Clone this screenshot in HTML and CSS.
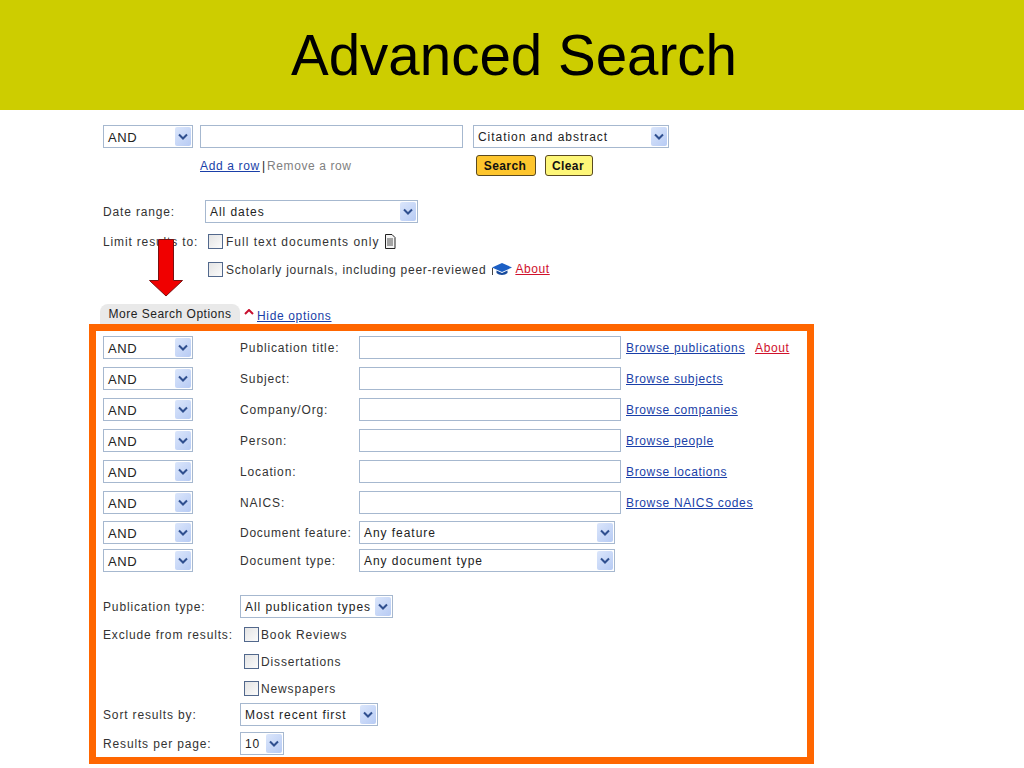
FILE: index.html
```html
<!DOCTYPE html>
<html lang="en">
<head>
<meta charset="utf-8">
<title>Advanced Search</title>
<link rel="stylesheet" href="styles.css">
</head>
<body>
<header class="band"><h1 class="title">Advanced Search</h1></header>
<main class="page">
  <div class="upper">
    <div class="row-main">
      <div class="sel w90"><span class="sel-text">AND</span><span class="sel-arrow"><svg width="10" height="7" viewBox="0 0 10 7"><path d="M1 1.500L5 5.500L9 1.500" fill="none" stroke="#2f4f8f" stroke-width="2"/></svg></span></div>
      <input class="field" type="text">
      <div class="sel w196"><span class="sel-text">Citation and abstract</span><span class="sel-arrow"><svg width="10" height="7" viewBox="0 0 10 7"><path d="M1 1.500L5 5.500L9 1.500" fill="none" stroke="#2f4f8f" stroke-width="2"/></svg></span></div>
    </div>
    <div class="row-actions">
      <div class="row-links"><a class="link" href="#">Add a row</a><span class="sep">|</span><span class="muted">Remove a row</span></div>
      <button class="btn btn-search" type="button">Search</button>
      <button class="btn btn-clear" type="button">Clear</button>
    </div>
    <div class="row-date">
      <span class="lbl lbl-date">Date range:</span>
      <div class="sel w213"><span class="sel-text">All dates</span><span class="sel-arrow"><svg width="10" height="7" viewBox="0 0 10 7"><path d="M1 1.500L5 5.500L9 1.500" fill="none" stroke="#2f4f8f" stroke-width="2"/></svg></span></div>
    </div>
    <div class="row-limit">
      <span class="lbl lbl-limit">Limit results to:</span>
      <span class="box"></span><span class="lbl lbl-wide">Full text documents only</span>
      <svg class="doc" width="12" height="15" viewBox="0 0 12 15"><path d="M1.500 .5H8L11 3.500V14.500H1.500Z" fill="#f4f4f4" stroke="#222"/><path d="M3 5H9M3 7H9M3 9H9M3 11H9" stroke="#555"/></svg>
    </div>
    <div class="row-limit row-scholar">
      <span class="box"></span><span class="lbl lbl-tight">Scholarly journals, including peer-reviewed</span>
      <svg class="cap" width="22" height="15" viewBox="0 0 22 15"><path d="M11 1L21 5.500L11 10L1 5.500Z" fill="#1c5fc4"/><path d="M5.500 8.500V11C8 13.500 14 13.500 16.500 11V8.500L11 11Z" fill="#174a9c"/><path d="M1.500 6V13" stroke="#444"/></svg>
      <a class="link-red" href="#">About</a>
    </div>
    <div class="row-tab">
      <span class="tab">More Search Options</span>
      <svg class="caret" width="10" height="6" viewBox="0 0 10 6"><path d="M1 5L5 1L9 5" fill="none" stroke="#c8102e" stroke-width="2"/></svg>
      <a class="link" href="#">Hide options</a>
    </div>
  </div>

  <section class="panel">
    <div class="grid-row">
      <div class="sel w90"><span class="sel-text">AND</span><span class="sel-arrow"><svg width="10" height="7" viewBox="0 0 10 7"><path d="M1 1.500L5 5.500L9 1.500" fill="none" stroke="#2f4f8f" stroke-width="2"/></svg></span></div>
      <span class="lbl">Publication title:</span>
      <input class="field" type="text">
      <span class="browse"><a class="link" href="#">Browse publications</a><a class="link-red about" href="#">About</a></span>
    </div>
    <div class="grid-row">
      <div class="sel w90"><span class="sel-text">AND</span><span class="sel-arrow"><svg width="10" height="7" viewBox="0 0 10 7"><path d="M1 1.500L5 5.500L9 1.500" fill="none" stroke="#2f4f8f" stroke-width="2"/></svg></span></div>
      <span class="lbl">Subject:</span>
      <input class="field" type="text">
      <span class="browse"><a class="link" href="#">Browse subjects</a></span>
    </div>
    <div class="grid-row">
      <div class="sel w90"><span class="sel-text">AND</span><span class="sel-arrow"><svg width="10" height="7" viewBox="0 0 10 7"><path d="M1 1.500L5 5.500L9 1.500" fill="none" stroke="#2f4f8f" stroke-width="2"/></svg></span></div>
      <span class="lbl">Company/Org:</span>
      <input class="field" type="text">
      <span class="browse"><a class="link" href="#">Browse companies</a></span>
    </div>
    <div class="grid-row">
      <div class="sel w90"><span class="sel-text">AND</span><span class="sel-arrow"><svg width="10" height="7" viewBox="0 0 10 7"><path d="M1 1.500L5 5.500L9 1.500" fill="none" stroke="#2f4f8f" stroke-width="2"/></svg></span></div>
      <span class="lbl">Person:</span>
      <input class="field" type="text">
      <span class="browse"><a class="link" href="#">Browse people</a></span>
    </div>
    <div class="grid-row">
      <div class="sel w90"><span class="sel-text">AND</span><span class="sel-arrow"><svg width="10" height="7" viewBox="0 0 10 7"><path d="M1 1.500L5 5.500L9 1.500" fill="none" stroke="#2f4f8f" stroke-width="2"/></svg></span></div>
      <span class="lbl">Location:</span>
      <input class="field" type="text">
      <span class="browse"><a class="link" href="#">Browse locations</a></span>
    </div>
    <div class="grid-row">
      <div class="sel w90"><span class="sel-text">AND</span><span class="sel-arrow"><svg width="10" height="7" viewBox="0 0 10 7"><path d="M1 1.500L5 5.500L9 1.500" fill="none" stroke="#2f4f8f" stroke-width="2"/></svg></span></div>
      <span class="lbl">NAICS:</span>
      <input class="field" type="text">
      <span class="browse"><a class="link" href="#">Browse NAICS codes</a></span>
    </div>
    <div class="grid-row">
      <div class="sel w90"><span class="sel-text">AND</span><span class="sel-arrow"><svg width="10" height="7" viewBox="0 0 10 7"><path d="M1 1.500L5 5.500L9 1.500" fill="none" stroke="#2f4f8f" stroke-width="2"/></svg></span></div>
      <span class="lbl lbl-tight">Document feature:</span>
      <div class="sel w256"><span class="sel-text">Any feature</span><span class="sel-arrow"><svg width="10" height="7" viewBox="0 0 10 7"><path d="M1 1.500L5 5.500L9 1.500" fill="none" stroke="#2f4f8f" stroke-width="2"/></svg></span></div>
    </div>
    <div class="grid-row tight">
      <div class="sel w90"><span class="sel-text">AND</span><span class="sel-arrow"><svg width="10" height="7" viewBox="0 0 10 7"><path d="M1 1.500L5 5.500L9 1.500" fill="none" stroke="#2f4f8f" stroke-width="2"/></svg></span></div>
      <span class="lbl">Document type:</span>
      <div class="sel w256"><span class="sel-text">Any document type</span><span class="sel-arrow"><svg width="10" height="7" viewBox="0 0 10 7"><path d="M1 1.500L5 5.500L9 1.500" fill="none" stroke="#2f4f8f" stroke-width="2"/></svg></span></div>
    </div>

    <div class="opt-row opt-pub">
      <span class="lbl">Publication type:</span>
      <div class="sel w153"><span class="sel-text">All publication types</span><span class="sel-arrow"><svg width="10" height="7" viewBox="0 0 10 7"><path d="M1 1.500L5 5.500L9 1.500" fill="none" stroke="#2f4f8f" stroke-width="2"/></svg></span></div>
    </div>
    <div class="opt-row check-row first-check">
      <span class="lbl">Exclude from results:</span>
      <span class="check"><span class="box"></span><span class="lbl">Book Reviews</span></span>
    </div>
    <div class="opt-row check-row">
      <span></span>
      <span class="check"><span class="box"></span><span class="lbl">Dissertations</span></span>
    </div>
    <div class="opt-row check-row">
      <span></span>
      <span class="check"><span class="box"></span><span class="lbl">Newspapers</span></span>
    </div>
    <div class="opt-row opt-sort">
      <span class="lbl">Sort results by:</span>
      <div class="sel w138"><span class="sel-text">Most recent first</span><span class="sel-arrow"><svg width="10" height="7" viewBox="0 0 10 7"><path d="M1 1.500L5 5.500L9 1.500" fill="none" stroke="#2f4f8f" stroke-width="2"/></svg></span></div>
    </div>
    <div class="opt-row opt-per">
      <span class="lbl">Results per page:</span>
      <div class="sel w44"><span class="sel-text">10</span><span class="sel-arrow"><svg width="10" height="7" viewBox="0 0 10 7"><path d="M1 1.500L5 5.500L9 1.500" fill="none" stroke="#2f4f8f" stroke-width="2"/></svg></span></div>
    </div>
  </section>
</main>
<svg class="red-arrow" width="36" height="58" viewBox="0 0 36 58"><path d="M10.500 .5H25.500V41.500H34.500L18 57L1.500 41.500H10.500Z" fill="#f00000" stroke="#7a1010"/></svg>
</body>
</html>
```
FILE: styles.css
```css
* { box-sizing: border-box; }
html, body { margin: 0; padding: 0; }
body {
  position: relative;
  width: 1024px;
  height: 768px;
  overflow: hidden;
  background: #fff;
  color: #333;
  font-family: "Liberation Sans", Arial, sans-serif;
  font-size: 12px;
  letter-spacing: .85px;
}
.band {
  height: 110px;
  background: #cdcd00;
  display: flex;
  align-items: center;
  justify-content: center;
  padding-left: 4px;
  padding-top: 2px;
}
.title {
  margin: 0;
  font-size: 56.5px;
  font-weight: 400;
  letter-spacing: 0;
  color: #000;
  line-height: 1;
}
.page { padding-left: 89px; }
.upper { padding-left: 14px; padding-top: 15px; }

.row-main { display: flex; height: 23px; }
.row-main .field { width: 263px; margin-left: 7px; }
.row-main .w196 { margin-left: 10px; }

.row-actions { display: flex; align-items: flex-start; height: 22px; margin-top: 7px; }
.row-links { display: flex; gap: 2px; margin-left: 97px; width: 276px; padding-top: 4px; }
.sep { color: #222; letter-spacing: 0; }
.muted { color: #808080; letter-spacing: .6px; white-space: nowrap; }

.row-date { display: flex; align-items: center; height: 23px; margin-top: 23px; }
.lbl-date { width: 102px; }
.row-limit { display: flex; align-items: center; height: 28px; margin-top: 4px; }
.lbl-limit { width: 105px; }
.lbl-wide { letter-spacing: 1px; }
.lbl-tight { letter-spacing: .75px; }
.row-scholar { margin-top: 0; padding-left: 105px; }
.row-tab { display: flex; align-items: flex-end; height: 20px; margin-top: 21px; margin-left: -3px; }

.lbl { white-space: nowrap; padding-top: 1px; }
.link { color: #1a3fa8; text-decoration: underline; white-space: nowrap; letter-spacing: .65px; }
.link-red { color: #d0112b; text-decoration: underline; white-space: nowrap; letter-spacing: .6px; }

.sel {
  display: flex;
  align-items: center;
  justify-content: space-between;
  height: 23px;
  padding: 1px 1px 1px 4px;
  background: #fff;
  border: 1px solid #a6b8cf;
  color: #222;
  flex: none;
}
.sel-text { white-space: nowrap; padding-top: 1px; letter-spacing: .95px; }
.w90 .sel-text { font-size: 13px; letter-spacing: .6px; }
.sel-arrow {
  display: flex;
  align-items: center;
  justify-content: center;
  width: 16px;
  height: 100%;
  flex: none;
  background: linear-gradient(135deg, #dbe6fb, #b7cbf4);
  border-radius: 2px;
}
.w44 { width: 44px; }
.w90 { width: 90px; }
.w138 { width: 138px; }
.w153 { width: 153px; }
.w196 { width: 196px; }
.w213 { width: 213px; }
.w256 { width: 256px; }

.field {
  display: block;
  width: 262px;
  height: 23px;
  margin: 0;
  padding: 0;
  background: #fff;
  border: 1px solid #a6b8cf;
  border-radius: 0;
  outline: 0;
}

.btn {
  height: 21px;
  padding: 0 2px 0 0;
  font-family: inherit;
  font-size: 12px;
  font-weight: 700;
  letter-spacing: .4px;
  color: #111;
  border: 1px solid #5a4a20;
  border-radius: 3px;
}
.btn-search { width: 60px; background: #fdc52d; }
.btn-clear { width: 48px; margin-left: 9px; background: #fdf678; }

.box {
  display: block;
  flex: none;
  width: 15px;
  height: 15px;
  margin-right: 3px;
  background: linear-gradient(135deg, #e4e4e4, #fbfbfb);
  border: 1px solid #52688c;
}
.doc { margin-left: 5px; }
.cap { margin-left: 5px; margin-right: 2px; }

.tab {
  display: flex;
  align-items: center;
  justify-content: center;
  width: 140px;
  height: 20px;
  background: #e9e9e9;
  border-radius: 8px 8px 0 0;
  color: #222;
  letter-spacing: .5px;
}
.caret { margin: 0 3px 9px 4px; }
.row-tab .link { padding-bottom: 1px; }

.panel {
  width: 725px;
  height: 440px;
  padding: 5px 0 0 7px;
  border: 7px solid #ff6600;
}
.grid-row {
  display: grid;
  grid-template-columns: 137px 119px 267px auto;
  align-items: center;
  height: 23px;
  margin-bottom: 8px;
}
.grid-row:nth-child(6) { margin-bottom: 7px; }
.grid-row:nth-child(7) { margin-bottom: 5px; }
.grid-row.tight { margin-bottom: 0; }
.browse { padding-top: 1px; }
.about { margin-left: 10px; }

.opt-row {
  display: grid;
  grid-template-columns: 137px auto;
  align-items: center;
  justify-items: start;
  height: 23px;
}
.opt-pub { margin-top: 23px; }
.opt-pub .sel-text { padding-top: 0; }
.check-row { height: 27px; }
.first-check { margin-top: 3px; }
.check { display: flex; align-items: center; padding-left: 4px; }
.check .box { margin-right: 2px; }
.opt-sort { margin-top: 1px; }
.opt-per { margin-top: 6px; }

.red-arrow { position: absolute; left: 148px; top: 239px; }
```
